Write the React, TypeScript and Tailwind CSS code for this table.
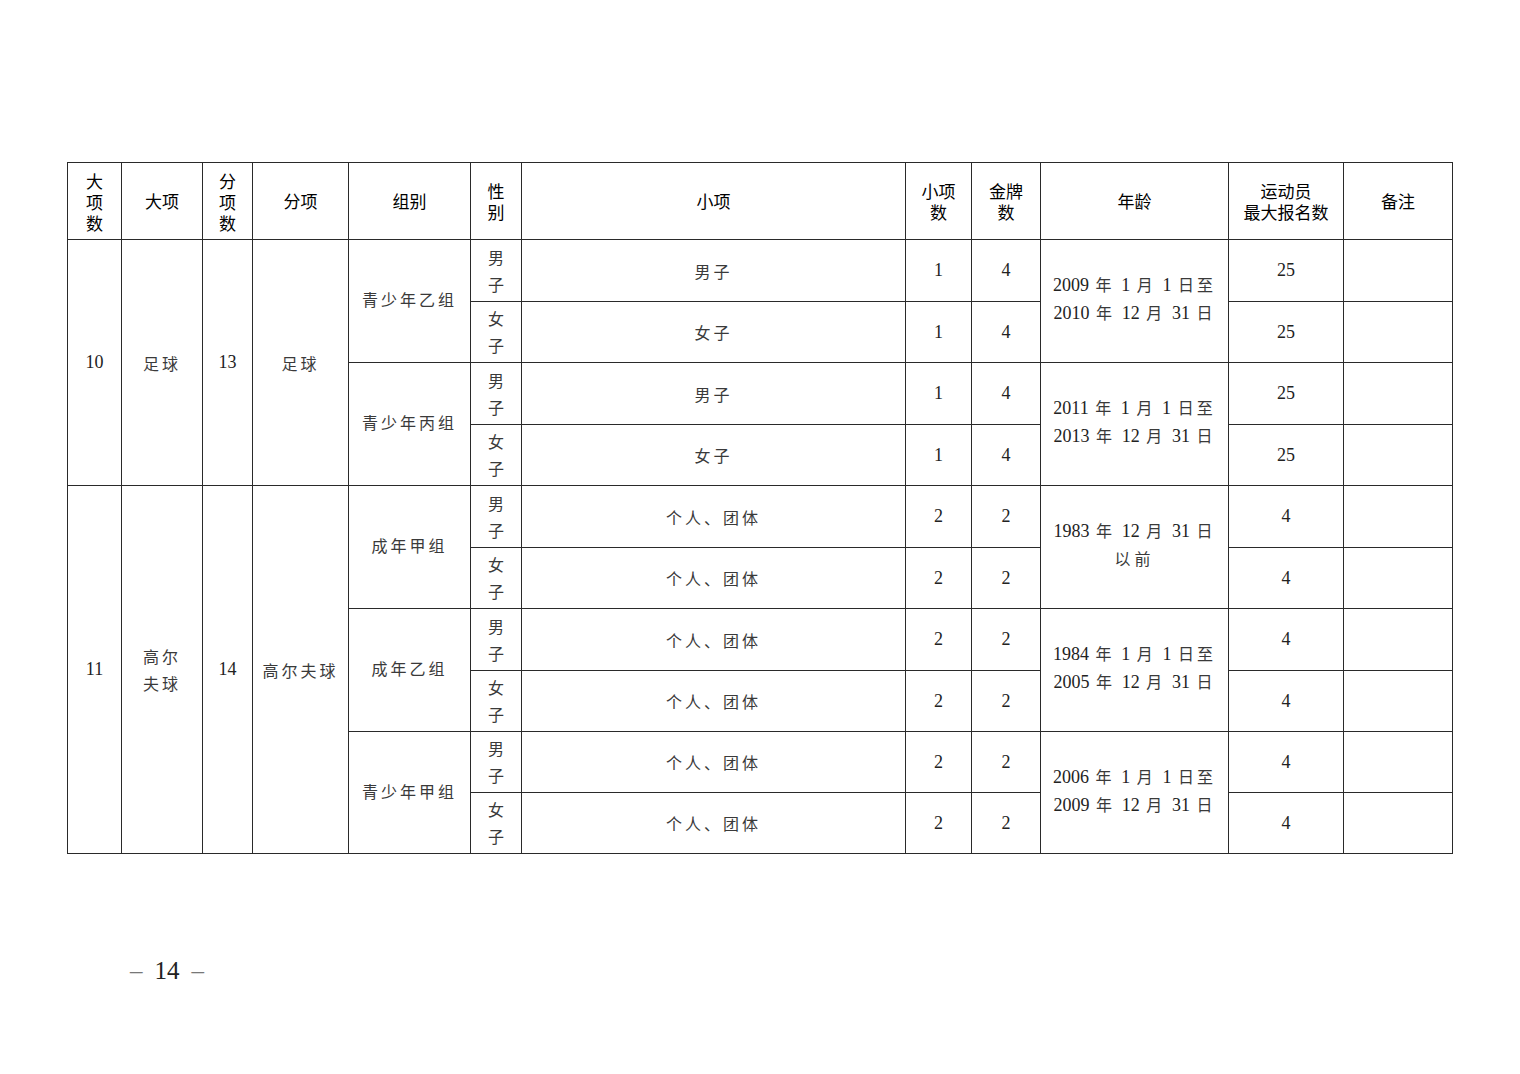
const widths = [54, 81, 50, 96, 122, 51, 384, 66, 69, 188, 115, 109]
const rowH = [62, 61, 62, 61, 62, 61, 62, 61, 61, 61]

const body = "font-['Noto_Sans_CJK_SC',sans-serif] text-[16px] tracking-[3px] text-[#3a3a3a]"
const num = "font-['Liberation_Serif','Noto_Sans_CJK_SC',serif] text-[18px] text-[#222]"
const cell = 'border border-[#2a2a2a] text-center align-middle p-0'

function Head({ lines }: { lines: string[] }) {
  return (
    <div className="leading-[21px]">
      {lines.map((l) => (
        <div key={l}>{l}</div>
      ))}
    </div>
  )
}

function Sex({ s }: { s: string }) {
  return (
    <div className={`${body} tracking-normal leading-[27px]`}>
      <div>{s}</div>
      <div>子</div>
    </div>
  )
}

function Age({ a, b }: { a: React.ReactNode; b: React.ReactNode }) {
  return (
    <div className={`${num} leading-[27px] -mt-[4px]`}>
      <div>{a}</div>
      <div>{b}</div>
    </div>
  )
}

const C = ({ t }: { t: string }) => <span className={`${body} text-[15px] tracking-[1px]`}> {t} </span>

function Date({ y, m, d, end }: { y: string; m: string; d: string; end: string }) {
  return (
    <span>
      {y}
      <C t="年" />
      {m}
      <C t="月" />
      {d}
      <span className={`${body} text-[15px] tracking-[2px]`}> {end}</span>
    </span>
  )
}

type Row = {
  group?: { name: string; span: number }
  sex: string
  item: string
  n: string
  g: string
  age?: { a: React.ReactNode; b: React.ReactNode; span: number }
  max: string
}

const rows: Row[] = [
  { group: { name: '青少年乙组', span: 2 }, sex: '男', item: '男子', n: '1', g: '4', age: { a: <Date y="2009" m="1" d="1" end="日至" />, b: <Date y="2010" m="12" d="31" end="日" />, span: 2 }, max: '25' },
  { sex: '女', item: '女子', n: '1', g: '4', max: '25' },
  { group: { name: '青少年丙组', span: 2 }, sex: '男', item: '男子', n: '1', g: '4', age: { a: <Date y="2011" m="1" d="1" end="日至" />, b: <Date y="2013" m="12" d="31" end="日" />, span: 2 }, max: '25' },
  { sex: '女', item: '女子', n: '1', g: '4', max: '25' },
  { group: { name: '成年甲组', span: 2 }, sex: '男', item: '个人、团体', n: '2', g: '2', age: { a: <Date y="1983" m="12" d="31" end="日" />, b: <span className={`${body} tracking-[4px]`}>以前</span>, span: 2 }, max: '4' },
  { sex: '女', item: '个人、团体', n: '2', g: '2', max: '4' },
  { group: { name: '成年乙组', span: 2 }, sex: '男', item: '个人、团体', n: '2', g: '2', age: { a: <Date y="1984" m="1" d="1" end="日至" />, b: <Date y="2005" m="12" d="31" end="日" />, span: 2 }, max: '4' },
  { sex: '女', item: '个人、团体', n: '2', g: '2', max: '4' },
  { group: { name: '青少年甲组', span: 2 }, sex: '男', item: '个人、团体', n: '2', g: '2', age: { a: <Date y="2006" m="1" d="1" end="日至" />, b: <Date y="2009" m="12" d="31" end="日" />, span: 2 }, max: '4' },
  { sex: '女', item: '个人、团体', n: '2', g: '2', max: '4' },
]

export default function App() {
  return (
    <div className="w-[1520px] h-[1074px] bg-white relative overflow-hidden">
      <div className="pt-[162px] pl-[67px]">
        <table className="border-collapse table-fixed w-[1386px]">
          <colgroup>
            {widths.map((w, i) => (
              <col key={i} style={{ width: w }} />
            ))}
          </colgroup>
          <thead>
            <tr className="h-[77px] font-['Noto_Sans_CJK_SC',sans-serif] text-[17px] text-black font-normal">
              <th className={`${cell} font-normal`}><Head lines={['大', '项', '数']} /></th>
              <th className={`${cell} font-normal`}>大项</th>
              <th className={`${cell} font-normal`}><Head lines={['分', '项', '数']} /></th>
              <th className={`${cell} font-normal`}>分项</th>
              <th className={`${cell} font-normal`}>组别</th>
              <th className={`${cell} font-normal`}><Head lines={['性', '别']} /></th>
              <th className={`${cell} font-normal`}>小项</th>
              <th className={`${cell} font-normal`}><Head lines={['小项', '数']} /></th>
              <th className={`${cell} font-normal`}><Head lines={['金牌', '数']} /></th>
              <th className={`${cell} font-normal`}>年龄</th>
              <th className={`${cell} font-normal`}><Head lines={['运动员', '最大报名数']} /></th>
              <th className={`${cell} font-normal`}>备注</th>
            </tr>
          </thead>
          <tbody>
            {rows.map((r, i) => (
              <tr key={i} style={{ height: rowH[i] }}>
                {i === 0 && (
                  <>
                    <td rowSpan={4} className={`${cell} ${num}`}>10</td>
                    <td rowSpan={4} className={`${cell} ${body}`}>足球</td>
                    <td rowSpan={4} className={`${cell} ${num}`}>13</td>
                    <td rowSpan={4} className={`${cell} ${body}`}>足球</td>
                  </>
                )}
                {i === 4 && (
                  <>
                    <td rowSpan={6} className={`${cell} ${num}`}>11</td>
                    <td rowSpan={6} className={`${cell} ${body} leading-[27px]`}>
                      <div>高尔</div>
                      <div>夫球</div>
                    </td>
                    <td rowSpan={6} className={`${cell} ${num}`}>14</td>
                    <td rowSpan={6} className={`${cell} ${body}`}>高尔夫球</td>
                  </>
                )}
                {r.group && (
                  <td rowSpan={r.group.span} className={`${cell} ${body}`}>
                    <div className="-mt-[4px]">{r.group.name}</div>
                  </td>
                )}
                <td className={cell}><Sex s={r.sex} /></td>
                <td className={`${cell} ${body}`}>{r.item}</td>
                <td className={`${cell} ${num}`}>{r.n}</td>
                <td className={`${cell} ${num}`}>{r.g}</td>
                {r.age && (
                  <td rowSpan={r.age.span} className={cell}>
                    <Age a={r.age.a} b={r.age.b} />
                  </td>
                )}
                <td className={`${cell} ${num}`}>{r.max}</td>
                <td className={cell}></td>
              </tr>
            ))}
          </tbody>
        </table>
      </div>
      <div className="pl-[130px] pt-[98px] font-['Liberation_Serif',serif] text-[25px] text-[#222] flex items-center gap-[12px]">
        <span className="text-[#777]">–</span>
        <span>14</span>
        <span className="text-[#777]">–</span>
      </div>
    </div>
  )
}
